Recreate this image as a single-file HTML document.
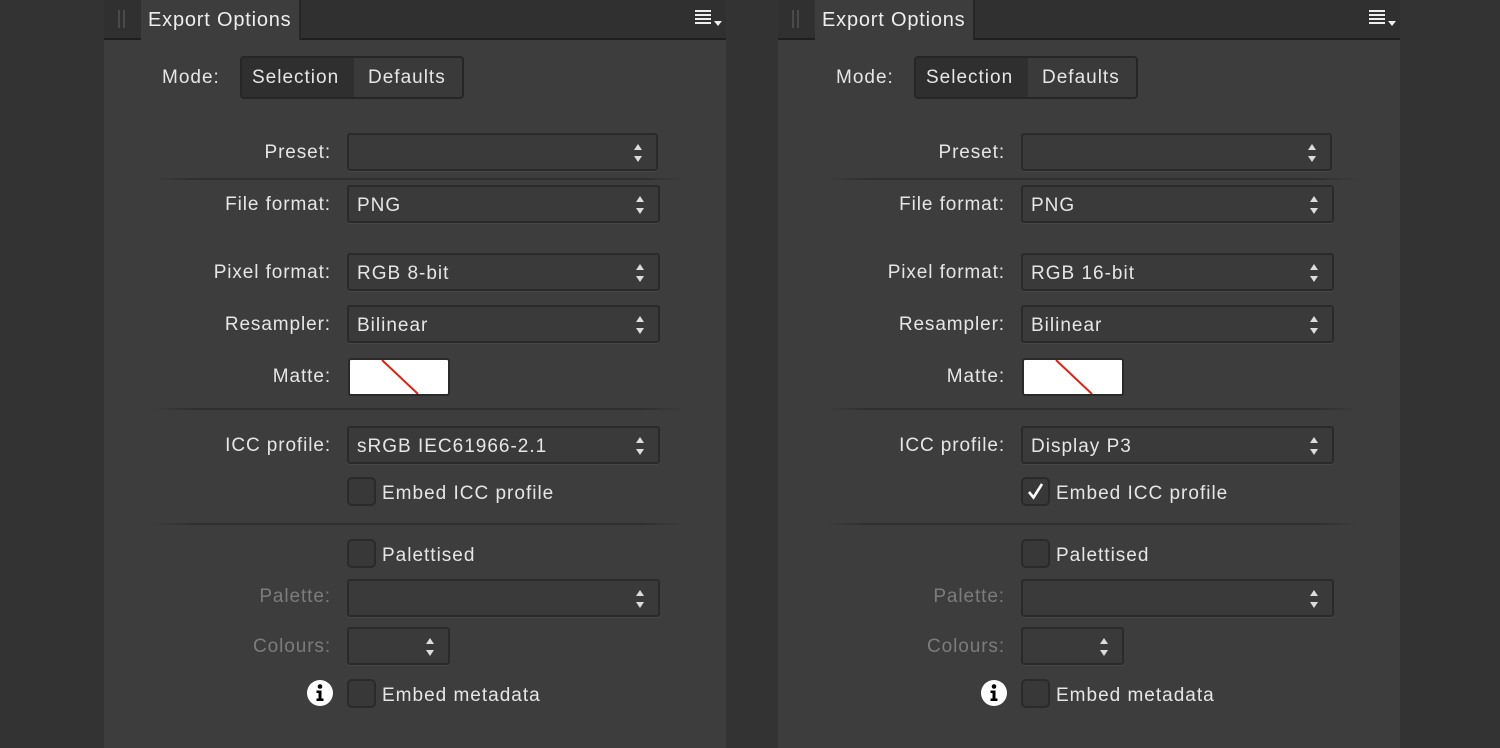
<!DOCTYPE html>
<html><head><meta charset="utf-8">
<style>
*{box-sizing:border-box;margin:0;padding:0}
body{width:1500px;height:748px;background:#333;position:relative;overflow:hidden;font-family:"Liberation Sans",sans-serif;font-size:19px;color:#e6e6e6;letter-spacing:1px}
.p{position:absolute;top:0;width:622px;height:748px;background:#3d3d3d}
.hdr{position:absolute;left:0;top:0;width:622px;height:40px;background:#303030;border-bottom:2px solid #1f1f1f}
.grip{position:absolute;left:14px;top:10px;width:7px;height:18px;border-left:2px solid #4a4a4a;border-right:2px solid #4a4a4a}
.tab{position:absolute;left:37px;top:0;width:160px;height:40px;background:#3d3d3d;border-right:2px solid #262626}
.tab span{position:absolute;left:7px;top:9px;font-size:20px;color:#eee;letter-spacing:0.8px}
.menu{position:absolute;left:591px;top:10px;width:16px}
.menu i{display:block;height:2px;background:#eee;margin-bottom:2px}
.menu b{position:absolute;left:19px;top:11px;width:0;height:0;border-left:4px solid transparent;border-right:4px solid transparent;border-top:5px solid #eee}
.a{position:absolute}
.lbl{position:absolute;right:395px;text-align:right;white-space:nowrap;letter-spacing:0.9px}
.dis{color:#7c7c7c}
.dd{position:absolute;left:243px;height:38px;border:2px solid #2a2a2a;border-radius:3px;background:#3a3a3a;box-shadow:0 1px 0 #474747}
.dd span{position:absolute;left:8px;top:8px}
.ar{position:absolute;right:14px;top:9px;width:8px;height:18px}
.ar:before,.ar:after{content:"";position:absolute;left:0;border-left:4px solid transparent;border-right:4px solid transparent}
.ar:before{top:0;border-bottom:6px solid #ddd}
.ar:after{bottom:0;border-top:6px solid #ddd}
.sep{position:absolute;left:48px;width:533px;height:2px;background:linear-gradient(90deg,rgba(40,40,40,0),#2f2f2f 8%,#2f2f2f 92%,rgba(40,40,40,0))}
.cb{position:absolute;left:243px;width:29px;height:29px;border:2px solid #2a2a2a;border-radius:5px;background:#383838}
.cbl{position:absolute;left:278px;white-space:nowrap}
</style></head><body>
<div class="p" id="p1" style="left:104px">
<div class="hdr"><div class="grip"></div><div class="tab"><span>Export Options</span></div>
<div class="menu"><i></i><i></i><i></i><i></i><b></b></div></div>
<div class="a" style="left:58px;top:67px">Mode:</div>
<div class="a" style="left:136px;top:56px;width:224px;height:43px;border:2px solid #262626;border-radius:4px;background:#3a3a3a;overflow:hidden">
<div style="position:absolute;left:0;top:0;width:112px;height:39px;background:#2f2f2f"></div>
<span style="position:absolute;left:10px;top:9px">Selection</span>
<span style="position:absolute;left:126px;top:9px">Defaults</span></div>
<div class="lbl" style="top:142px">Preset:</div>
<div class="dd" style="top:133px;width:311px"><div class="ar"></div></div>
<div class="sep" style="top:178px"></div>
<div class="lbl" style="top:194px">File format:</div>
<div class="dd" style="top:185px;width:313px"><span>PNG</span><div class="ar"></div></div>
<div class="lbl" style="top:262px">Pixel format:</div>
<div class="dd" style="top:253px;width:313px"><span class="pf">RGB 8-bit</span><div class="ar"></div></div>
<div class="lbl" style="top:314px">Resampler:</div>
<div class="dd" style="top:305px;width:313px"><span>Bilinear</span><div class="ar"></div></div>
<div class="lbl" style="top:366px">Matte:</div>
<div class="a" style="left:244px;top:358px;width:102px;height:38px;background:#fff;border:2px solid #2a2a2a;border-radius:3px;overflow:hidden">
<svg width="98" height="34" style="position:absolute;left:0;top:0"><line x1="32" y1="0" x2="68" y2="34" stroke="#d21" stroke-width="2"/></svg></div>
<div class="sep" style="top:408px"></div>
<div class="lbl" style="top:435px">ICC profile:</div>
<div class="dd" style="top:426px;width:313px"><span class="icc">sRGB IEC61966-2.1</span><div class="ar"></div></div>
<div class="cb cb1" style="top:477px"></div>
<div class="cbl" style="top:483px">Embed ICC profile</div>
<div class="sep" style="top:523px"></div>
<div class="cb" style="top:539px"></div>
<div class="cbl" style="top:545px">Palettised</div>
<div class="lbl dis" style="top:586px">Palette:</div>
<div class="dd" style="top:579px;width:313px"><div class="ar"></div></div>
<div class="lbl dis" style="top:636px">Colours:</div>
<div class="dd" style="top:627px;width:103px"><div class="ar"></div></div>
<svg class="a" style="left:202px;top:679px" width="28" height="28"><circle cx="14" cy="14" r="13" fill="#fff"/><circle cx="14" cy="7.5" r="2.3" fill="#000"/><path d="M10.5 11.5h5v8h2v2.5h-7v-2.5h2v-5.5h-2z" fill="#000"/></svg>
<div class="cb" style="top:679px"></div>
<div class="cbl" style="top:685px">Embed metadata</div>
</div>
<script>
var p1=document.getElementById('p1');var p2=p1.cloneNode(true);p2.id='p2';p2.style.left='778px';
p2.querySelector('.pf').textContent='RGB 16-bit';
p2.querySelector('.icc').textContent='Display P3';
p2.querySelector('.cb1').innerHTML='<svg width="25" height="25" style="position:absolute;left:0;top:0"><path d="M6 13l4.5 5.5L19 5" fill="none" stroke="#fff" stroke-width="2.6"/></svg>';
document.body.appendChild(p2);
</script>
</body></html>
